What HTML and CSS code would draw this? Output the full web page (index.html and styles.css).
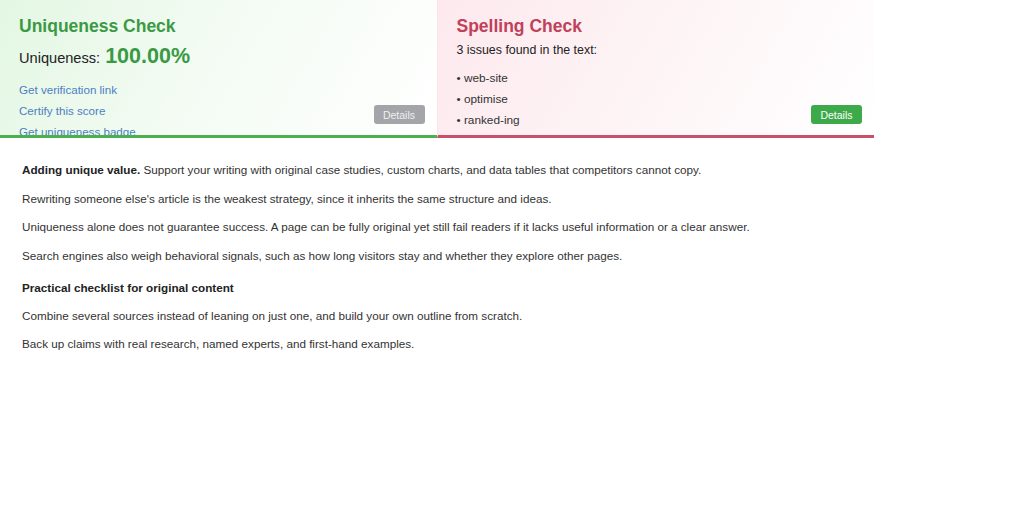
FILE: index.html
```html
<!DOCTYPE html>
<html>
<head>
<meta charset="utf-8">
<link rel="stylesheet" href="styles.css">
</head>
<body>
<div class="panels">
  <section class="panel panel-unique">
    <h2 class="panel-title title-green">Uniqueness Check</h2>
    <div class="score"><span class="score-label">Uniqueness:</span> <span class="score-value">100.00%</span></div>
    <ul class="links">
      <li><a href="#">Get verification link</a></li>
      <li><a href="#">Certify this score</a></li>
      <li><a href="#">Get uniqueness badge</a></li>
    </ul>
    <button class="btn btn-gray">Details</button>
  </section>
  <section class="panel panel-spell">
    <h2 class="panel-title title-red">Spelling Check</h2>
    <div class="issues">3 issues found in the text:</div>
    <ul class="bullets">
      <li>• web-site</li>
      <li>• optimise</li>
      <li>• ranked-ing</li>
    </ul>
    <button class="btn btn-green">Details</button>
  </section>
</div>
<main class="article">
  <p><strong>Adding unique value.</strong> Support your writing with original case studies, custom charts, and data tables that competitors cannot copy.</p>
  <p>Rewriting someone else's article is the weakest strategy, since it inherits the same structure and ideas.</p>
  <p>Uniqueness alone does not guarantee success. A page can be fully original yet still fail readers if it lacks useful information or a clear answer.</p>
  <p>Search engines also weigh behavioral signals, such as how long visitors stay and whether they explore other pages.</p>
  <h3 class="subhead">Practical checklist for original content</h3>
  <p>Combine several sources instead of leaning on just one, and build your own outline from scratch.</p>
  <p>Back up claims with real research, named experts, and first-hand examples.</p>
</main>
</body>
</html>
```

FILE: styles.css
```css
* { box-sizing: border-box; }
body {
  margin: 0;
  background: #fff;
  font-family: "Liberation Sans", Arial, sans-serif;
  color: #333;
}
.panels {
  display: flex;
  width: 874px;
}
.panel {
  position: relative;
  flex: 1;
  height: 138px;
  overflow: hidden;
  padding: 15px 19px 0;
}
.panel-unique {
  background: linear-gradient(120deg, #e3f7e3 0%, #f3fbf3 45%, #ffffff 100%);
  border-bottom: 3px solid #4caf50;
}
.panel-spell {
  background: linear-gradient(120deg, #fde9ed 0%, #fdf3f5 45%, #ffffff 100%);
  border-bottom: 3px solid #c9506a;
  border-left: 1px solid #fce6ea;
}
.panel-title {
  margin: 0;
  font-size: 17.5px;
  line-height: 22px;
  font-weight: bold;
}
.title-green { color: #3a9a44; }
.title-red { color: #c1405a; }
.score {
  margin-top: 7px;
  height: 28px;
  display: flex;
  align-items: baseline;
  gap: 5px;
}
.score-label { font-size: 14.6px; color: #222; }
.score-value { font-size: 21.5px; font-weight: bold; color: #3a9a44; }
.links {
  list-style: none;
  margin: 7px 0 0;
  padding: 0;
}
.links li {
  font-size: 11.6px;
  line-height: 21px;
}
.links a {
  color: #4a7fc4;
  text-decoration: none;
}
.links li:last-child a { text-decoration: underline; }
.issues {
  margin-top: 5px;
  font-size: 12.4px;
  line-height: 16px;
  color: #222;
}
.bullets {
  list-style: none;
  margin: 10px 0 0;
  padding: 0;
}
.bullets li {
  font-size: 11.8px;
  line-height: 21px;
  color: #333;
}
.btn {
  position: absolute;
  right: 12px;
  bottom: 11px;
  width: 51px;
  height: 19px;
  border: none;
  border-radius: 3px;
  color: #fff;
  font-family: "Liberation Sans", Arial, sans-serif;
  font-size: 10.5px;
  padding: 0;
}
.btn-gray { background: #a3a5a8; color: #eef0f2; }
.btn-green { background: #3daa4a; }
.article {
  padding: 24px 22px 0;
}
.article p {
  margin: 0 0 13px;
  font-size: 11.7px;
  line-height: 15.6px;
  color: #333;
}
.article strong { color: #222; }
.subhead {
  margin: 16.4px 0 12.4px;
  font-size: 11.7px;
  line-height: 15.6px;
  font-weight: bold;
  color: #222;
}
```
